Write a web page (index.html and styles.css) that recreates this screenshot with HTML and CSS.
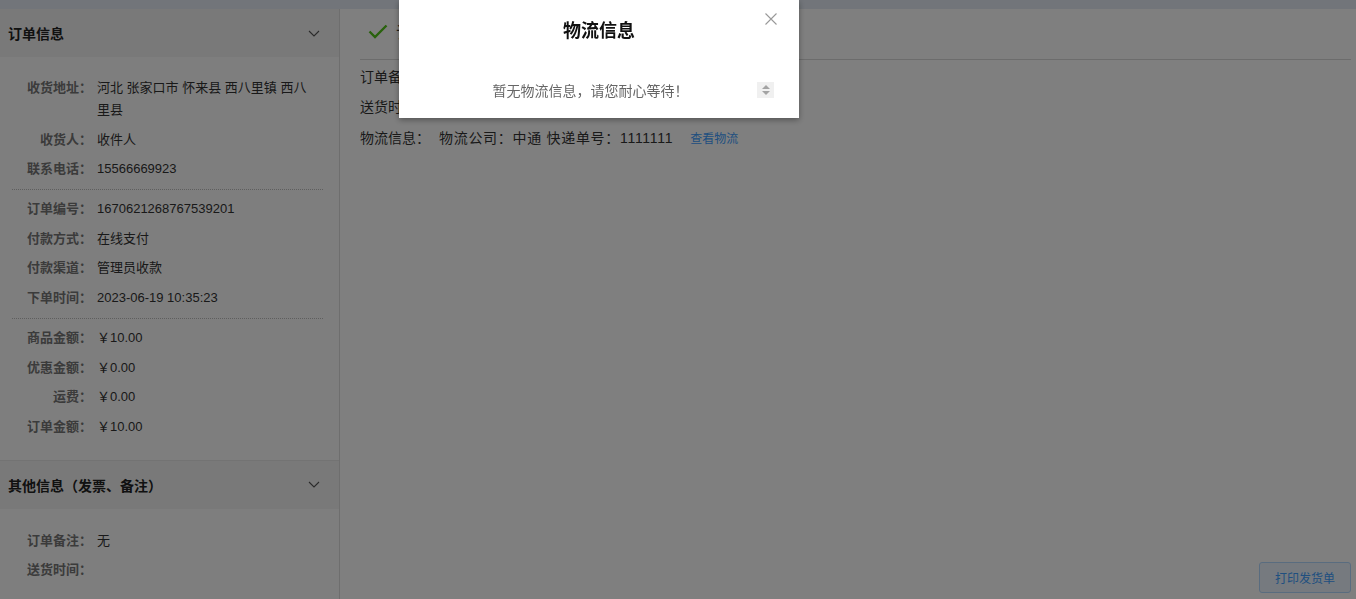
FILE: index.html
```html
<!DOCTYPE html>
<html lang="zh-CN">
<head>
<meta charset="utf-8">
<title>订单详情</title>
<link rel="stylesheet" href="styles.css">
</head>
<body>
<div class="page">
  <div class="topbar"></div>
  <div class="main">
    <aside class="side">
      <div class="sec-head">
        <span>订单信息</span>
        <svg class="chev" width="12" height="7" viewBox="0 0 12 7"><path d="M1 1 L6 6 L11 1" fill="none" stroke="#555" stroke-width="1.1"/></svg>
      </div>
      <div class="sec-body">
        <div class="group">
          <div class="row"><span class="lab">收货地址：</span><span class="val">河北 张家口市 怀来县 西八里镇 西八里县</span></div>
          <div class="row"><span class="lab">收货人：</span><span class="val">收件人</span></div>
          <div class="row"><span class="lab">联系电话：</span><span class="val">15566669923</span></div>
        </div>
        <div class="group">
          <div class="row"><span class="lab">订单编号：</span><span class="val">1670621268767539201</span></div>
          <div class="row"><span class="lab">付款方式：</span><span class="val">在线支付</span></div>
          <div class="row"><span class="lab">付款渠道：</span><span class="val">管理员收款</span></div>
          <div class="row"><span class="lab">下单时间：</span><span class="val">2023-06-19 10:35:23</span></div>
        </div>
        <div class="group last">
          <div class="row"><span class="lab">商品金额：</span><span class="val">￥10.00</span></div>
          <div class="row"><span class="lab">优惠金额：</span><span class="val">￥0.00</span></div>
          <div class="row"><span class="lab">运费：</span><span class="val">￥0.00</span></div>
          <div class="row"><span class="lab">订单金额：</span><span class="val">￥10.00</span></div>
        </div>
      </div>
      <div class="sec-head">
        <span>其他信息（发票、备注）</span>
        <svg class="chev" width="12" height="7" viewBox="0 0 12 7"><path d="M1 1 L6 6 L11 1" fill="none" stroke="#555" stroke-width="1.1"/></svg>
      </div>
      <div class="sec-body tail">
        <div class="group last">
          <div class="row"><span class="lab">订单备注：</span><span class="val">无</span></div>
          <div class="row"><span class="lab">送货时间：</span><span class="val"></span></div>
        </div>
      </div>
    </aside>
    <section class="content">
      <div class="status">
        <svg class="check" width="20" height="15" viewBox="0 0 20 15"><path d="M1.5 7.5 L7 13 L18.5 1.5" fill="none" stroke="#52c41a" stroke-width="2.4"/></svg>
        <span class="status-text">订单已发货</span>
      </div>
      <div class="info">
        <div class="irow">订单备注：无</div>
        <div class="irow">送货时间：</div>
        <div class="irow">物流信息：<span class="ship">物流公司：中通 快递单号：1111111</span><a class="link" href="#">查看物流</a></div>
      </div>
      <div class="foot">
        <button class="print">打印发货单</button>
      </div>
    </section>
  </div>
</div>
<div class="mask"></div>
<div class="modal">
  <div class="modal-title">物流信息</div>
  <svg class="close" width="12" height="12" viewBox="0 0 12 12"><path d="M0.5 0.5 L11.5 11.5 M11.5 0.5 L0.5 11.5" stroke="#999" stroke-width="1.1"/></svg>
  <div class="modal-body">
    <div class="empty">暂无物流信息，请您耐心等待！</div>
    <div class="spin"><span class="up"></span><span class="down"></span></div>
  </div>
</div>
</body>
</html>
```

FILE: styles.css
```css
html, body {
  margin: 0;
  padding: 0;
  width: 1356px;
  height: 599px;
  overflow: hidden;
  background: #fff;
  font-family: "Liberation Sans", "Noto Sans CJK SC", sans-serif;
  color: #333;
}
.page {
  display: flex;
  flex-direction: column;
  height: 599px;
}
.topbar {
  height: 9px;
  background: #e4ebf4;
  flex: none;
}
.main {
  flex: 1;
  display: flex;
  min-height: 0;
}
.side {
  width: 340px;
  flex: none;
  border-right: 1px solid #dcdcdc;
  box-sizing: border-box;
  background: #fdfdfd;
  overflow: hidden;
}
.sec-head {
  height: 48px;
  background: #f3f3f3;
  display: flex;
  align-items: center;
  justify-content: space-between;
  padding: 0 19px 0 8px;
  font-size: 14px;
  font-weight: bold;
  color: #222;
}
.sec-body {
  padding: 20px 16px 0 12px;
  border-bottom: 1px solid #e6e6e6;
}
.sec-body.tail {
  padding-top: 21px;
  border-bottom: none;
  min-height: 200px;
}
.group {
  border-bottom: 1px dotted #bdbdbd;
  padding-bottom: 1px;
  margin-bottom: 8px;
}
.group.last {
  border-bottom: none;
  padding-bottom: 14px;
  margin-bottom: 0;
}
.row {
  display: flex;
  font-size: 13px;
  line-height: 22px;
  margin-bottom: 7.7px;
}
.lab {
  width: 80px;
  flex: none;
  text-align: right;
  color: #777;
  font-weight: bold;
}
.val {
  margin-left: 5px;
  padding-right: 7px;
  color: #333;
  flex: 1;
}
.content {
  flex: 1;
  display: flex;
  flex-direction: column;
  padding: 0 5px 6px 20px;
  min-width: 0;
}
.status {
  height: 50px;
  border-bottom: 1px solid #d8d8d8;
  display: flex;
  align-items: center;
  padding-left: 8px;
  flex: none;
}
.check {
  margin-right: 8px;
  margin-top: -6px;
}
.status-text {
  font-size: 16px;
  color: #333;
  margin-top: -6px;
}
.info {
  padding-top: 2px;
  font-size: 14px;
  color: #333;
}
.irow {
  line-height: 30px;
}
.irow:last-child {
  margin-top: 1px;
}
.ship {
  margin-left: 9px;
  letter-spacing: 0.7px;
}
.link {
  margin-left: 17px;
  font-size: 12px;
  color: #409eff;
  text-decoration: none;
}
.foot {
  margin-top: auto;
  display: flex;
  justify-content: flex-end;
}
.print {
  width: 92px;
  height: 31px;
  background: #ecf5ff;
  border: 1px solid #b3d8ff;
  border-radius: 3px;
  color: #409eff;
  font-size: 12px;
  font-family: inherit;
  padding: 0;
}
.mask {
  position: fixed;
  inset: 0;
  background: rgba(0, 0, 0, 0.5);
}
.modal {
  position: fixed;
  top: 0;
  left: 399px;
  width: 400px;
  height: 118px;
  background: #fff;
  box-shadow: 0 2px 6px rgba(0, 0, 0, 0.35);
}
.modal-title {
  height: 62px;
  line-height: 63px;
  text-align: center;
  font-size: 18px;
  font-weight: bold;
  color: #111;
}
.close {
  position: absolute;
  top: 13px;
  right: 22px;
}
.modal-body {
  height: 56px;
  display: flex;
  align-items: center;
  padding: 0 25px 0 25px;
}
.empty {
  flex: 1;
  text-align: center;
  font-size: 14px;
  color: #666;
}
.spin {
  width: 17px;
  height: 16px;
  background: #f0f0f0;
  display: flex;
  flex-direction: column;
  align-items: center;
  justify-content: center;
  gap: 2px;
}
.up, .down {
  width: 0;
  height: 0;
  border-left: 4px solid transparent;
  border-right: 4px solid transparent;
}
.up { border-bottom: 4px solid #a3a3a3; }
.down { border-top: 4px solid #a3a3a3; }
```
